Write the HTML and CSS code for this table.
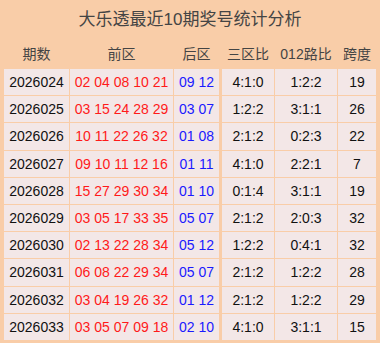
FILE: index.html
```html
<!DOCTYPE html>
<html>
<head>
<meta charset="utf-8">
<link rel="stylesheet" href="styles.css">
</head>
<body>
<div class="panel">
  <div class="title">大乐透最近10期奖号统计分析</div>
  <div class="grid">
    <div class="hd">期数</div><div class="hd">前区</div><div class="hd c3">后区</div><div class="hd">三区比</div><div class="hd">012路比</div><div class="hd">跨度</div>

    <div class="cell">2026024</div><div class="cell red">02 04 08 10 21</div><div class="cell blue c3">09 12</div><div class="cell">4:1:0</div><div class="cell">1:2:2</div><div class="cell">19</div>
    <div class="cell">2026025</div><div class="cell red">03 15 24 28 29</div><div class="cell blue c3">03 07</div><div class="cell">1:2:2</div><div class="cell">3:1:1</div><div class="cell">26</div>
    <div class="cell">2026026</div><div class="cell red">10 11 22 26 32</div><div class="cell blue c3">01 08</div><div class="cell">2:1:2</div><div class="cell">0:2:3</div><div class="cell">22</div>
    <div class="cell">2026027</div><div class="cell red">09 10 11 12 16</div><div class="cell blue c3">01 11</div><div class="cell">4:1:0</div><div class="cell">2:2:1</div><div class="cell">7</div>
    <div class="cell">2026028</div><div class="cell red">15 27 29 30 34</div><div class="cell blue c3">01 10</div><div class="cell">0:1:4</div><div class="cell">3:1:1</div><div class="cell">19</div>
    <div class="cell">2026029</div><div class="cell red">03 05 17 33 35</div><div class="cell blue c3">05 07</div><div class="cell">2:1:2</div><div class="cell">2:0:3</div><div class="cell">32</div>
    <div class="cell">2026030</div><div class="cell red">02 13 22 28 34</div><div class="cell blue c3">05 12</div><div class="cell">1:2:2</div><div class="cell">0:4:1</div><div class="cell">32</div>
    <div class="cell">2026031</div><div class="cell red">06 08 22 29 34</div><div class="cell blue c3">05 07</div><div class="cell">2:1:2</div><div class="cell">1:2:2</div><div class="cell">28</div>
    <div class="cell">2026032</div><div class="cell red">03 04 19 26 32</div><div class="cell blue c3">01 12</div><div class="cell">2:1:2</div><div class="cell">1:2:2</div><div class="cell">29</div>
    <div class="cell">2026033</div><div class="cell red">03 05 07 09 18</div><div class="cell blue c3">02 10</div><div class="cell">4:1:0</div><div class="cell">3:1:1</div><div class="cell">15</div>
  </div>
</div>
</body>
</html>
```
FILE: styles.css
```css
html, body {
  margin: 0;
  padding: 0;
  background: #f9cda8;
}
.panel {
  width: 380px;
  height: 343px;
  background: #f9cda8;
  font-family: "Liberation Sans", "Noto Sans CJK SC", sans-serif;
  box-sizing: border-box;
  padding: 0 4px;
  overflow: hidden;
}
.title {
  height: 37px;
  line-height: 40px;
  text-align: center;
  font-size: 17px;
  color: #444;
}
.grid {
  display: grid;
  grid-template-columns: 65px 103px 47px 52px 62px 38px;
  grid-template-rows: 31px;
  grid-auto-rows: 26.2px;
  column-gap: 1px;
  row-gap: 1px;
}
.hd {
  display: flex;
  align-items: center;
  justify-content: center;
  font-size: 14px;
  color: #444;
  margin-bottom: -1px;
}
.cell {
  display: flex;
  align-items: center;
  justify-content: center;
  font-size: 14px;
  color: #111;
  background: #f3e7e7;
}
.cell.c3 {
  border-right: 2px solid #f9cda8;
}
.hd.c3 {
  padding-right: 2px;
}
.red { color: #ff1a1a; }
.blue { color: #1a1aff; }
```
